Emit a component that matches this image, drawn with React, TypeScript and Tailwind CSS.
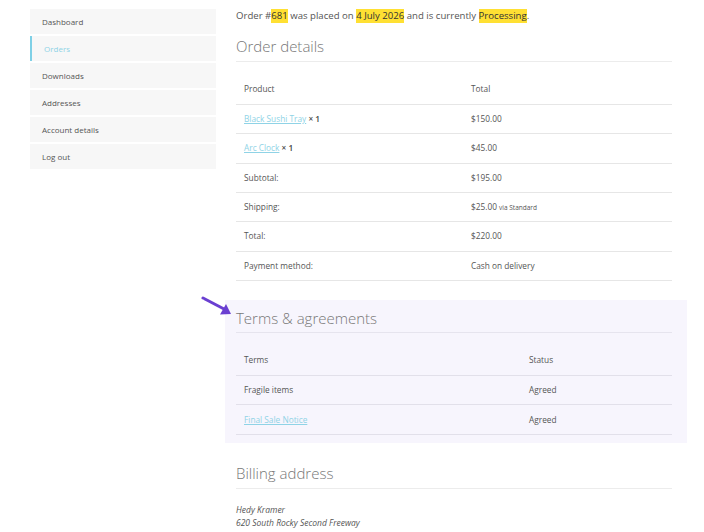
import React from "react";

const font = { fontFamily: '"Open Sans", "Noto Sans", sans-serif' };

function Side({ label, active }: { label: string; active?: boolean }) {
  return (
    <div
      className={
        "h-[25px] flex items-center bg-[#f7f7f7] pl-[12px] text-[8px] " +
        (active ? "border-l-2 border-[#7fd0e6] pl-[10px] text-[#8fd3e6]" : "text-[#555]")
      }
    >
      {label}
    </div>
  );
}

function Row({ a, b, head }: { a: React.ReactNode; b: React.ReactNode; head?: boolean }) {
  return (
    <div className={"grid grid-cols-[227px_1fr] items-center border-b border-[#e6e6e6] px-[8px] text-[8.3px] text-[#555] " + (head ? "h-[43px] pt-[13px]" : "h-[29.33px]")}>
      <div>{a}</div>
      <div>{b}</div>
    </div>
  );
}

function TRow({ a, b, head }: { a: React.ReactNode; b: React.ReactNode; head?: boolean }) {
  return (
    <div className={"grid grid-cols-[285px_1fr] items-center border-b border-[#e2e0ea] px-[8px] text-[8.3px] text-[#555] " + (head ? "h-[43px] pt-[13px]" : "h-[29.5px]")}>
      <div>{a}</div>
      <div>{b}</div>
    </div>
  );
}

const Link = ({ children }: { children: React.ReactNode }) => (
  <span className="text-[#8fd3e6] underline">{children}</span>
);

const Hl = ({ children }: { children: React.ReactNode }) => (
  <span className="bg-[#ffe033] text-[#333]">{children}</span>
);

const Qty = () => <span className="font-semibold text-[#444]">× 1</span>;

export default function App() {
  return (
    <div className="w-[704px] h-[532px] overflow-hidden bg-white" style={font}>
      <div className="flex gap-[20px] pl-[30px] pt-[9px]">
        <div className="w-[186px] flex flex-col gap-[2px]">
          <Side label="Dashboard" />
          <Side label="Orders" active />
          <Side label="Downloads" />
          <Side label="Addresses" />
          <Side label="Account details" />
          <Side label="Log out" />
        </div>
        <div className="w-[436px] flex flex-col">
          <div className="h-[14px] flex items-center text-[9.6px] text-[#555] whitespace-nowrap">
            Order #<Hl>681</Hl>&nbsp;was placed on&nbsp;<Hl>4 July 2026</Hl>&nbsp;and is currently&nbsp;<Hl>Processing</Hl>.
          </div>
          <div className="mt-[11px] h-[24px] flex items-center text-[15px] text-[#777] font-light border-b border-[#ececec] pb-[3px] box-content">
            Order details
          </div>
          <div>
            <Row head a="Product" b="Total" />
            <Row a={<><Link>Black Sushi Tray</Link> <Qty /></>} b="$150.00" />
            <Row a={<><Link>Arc Clock</Link> <Qty /></>} b="$45.00" />
            <Row a="Subtotal:" b="$195.00" />
            <Row a="Shipping:" b={<>$25.00 <span className="text-[6.5px]">via Standard</span></>} />
            <Row a="Total:" b="$220.00" />
            <Row a="Payment method:" b="Cash on delivery" />
          </div>

          <div className="relative mt-[19px] ml-[-11px] mr-[-15px] bg-[#f7f5fd] pl-[11px] pr-[15px] pt-[6px] pb-[8px]">
            <svg className="absolute left-[-24px] top-[-4px]" width="34" height="20" viewBox="0 0 34 20">
              <line x1="2" y1="2" x2="24" y2="13.5" stroke="#6a3fd1" strokeWidth="3" strokeLinecap="round" />
              <polygon points="30,18 19,18.5 25,8" fill="#6a3fd1" />
            </svg>
            <div className="h-[24px] flex items-center text-[15px] text-[#777] font-light border-b border-[#e6e4ee] pb-[2px] box-content">
              Terms &amp; agreements
            </div>
            <TRow head a="Terms" b="Status" />
            <TRow a="Fragile items" b="Agreed" />
            <TRow a={<Link>Final Sale Notice</Link>} b="Agreed" />
          </div>

          <div className="mt-[18px] h-[24px] flex items-center text-[15px] text-[#777] font-light border-b border-[#ececec] pb-[3px] box-content">
            Billing address
          </div>
          <div className="mt-[14px] text-[8.5px] italic text-[#555] leading-[13px]">
            <div>Hedy Kramer</div>
            <div>620 South Rocky Second Freeway</div>
          </div>
        </div>
      </div>
    </div>
  );
}
